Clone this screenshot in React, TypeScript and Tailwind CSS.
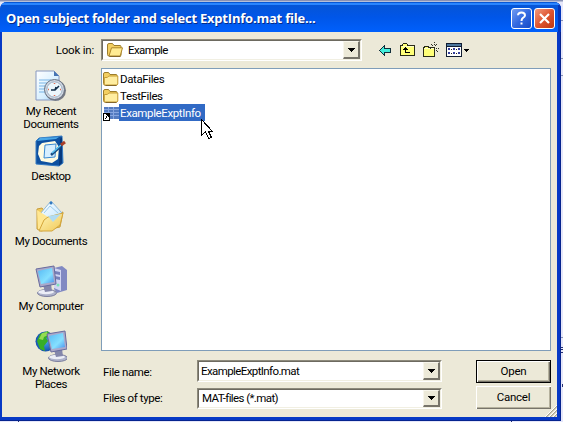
import type { ReactNode } from "react";

const ui = "font-['Roboto','Noto_Sans',sans-serif]";

function Folder({ open = false }: { open?: boolean }) {
  return (
    <svg width="16" height="14" viewBox="0 0 16 14" className="shrink-0">
      <path d="M.5 3V2Q.5.5 2 .5h3.5L7 2.5h6q1 0 1 1V12q0 1-1 1H2q-1.500 0-1.500-1.500z" fill="#f3cf62" stroke="#9c7d2c" />
      {open ? (
        <path d="M4.500 4.800h11L13.200 13H2z" fill="#ffeb91" stroke="#ad862b" />
      ) : (
        <path d="M1.300 5.500h3l1.500-1.500h9v8l-.8 1H1.300z" fill="#ffeda0" stroke="#c59c35" />
      )}
      <path d="M2.500 13.500h11" stroke="#83662a" />
    </svg>
  );
}

function Caret() {
  return (
    <svg width="7" height="4" viewBox="0 0 7 4" shapeRendering="crispEdges">
      <path d="M0 0h7v1H6v1H5v1H4v1H3V3H2V2H1V1H0z" />
    </svg>
  );
}

function Combo({ children, className }: { children: ReactNode; className: string }) {
  return (
    <div className={`flex border border-t-[#8d8a7c] border-l-[#8d8a7c] border-r-white border-b-white bg-white ${className}`}>
      <div className="flex min-w-0 flex-1 border border-t-[#6d6a60] border-l-[#6d6a60] border-r-[#f1efe2] border-b-[#f1efe2]">
        <div className="flex min-w-0 flex-1 items-center">{children}</div>
        <div className="flex w-[17px] items-center justify-center border-t border-l border-r-2 border-b-2 border-t-[#f8f6ec] border-l-[#f8f6ec] border-r-[#77746a] border-b-[#77746a] bg-[#ece9d8]">
          <Caret />
        </div>
      </div>
    </div>
  );
}

function RecentIcon() {
  return (
    <svg width="32" height="32" viewBox="0 0 32 32">
      <path d="M1 1h18l5 5v24H1z" fill="url(#paper)" stroke="#8798c0" />
      <path d="M19 1v5h5z" fill="#4574b3" />
      <path d="M4 10h12M4 13h9M4 16h7M4 19h6M4 22h6" stroke="#78b5e7" />
      <circle cx="20.500" cy="20.500" r="10.500" fill="#777b85" />
      <circle cx="19.500" cy="19.500" r="10" fill="#d1d9e4" stroke="#687180" />
      <circle cx="19.500" cy="19.500" r="7.700" fill="#ecf7fc" stroke="#9faec0" />
      <path d="M19.500 13v1M19.500 25v1M13 19.500h1M25 19.500h1" stroke="#e66950" strokeWidth="1.500" />
      <path d="M16 20h4l4-4M20 20l1-3" stroke="#14304a" strokeWidth="1.500" fill="none" />
    </svg>
  );
}

function DesktopIcon() {
  return (
    <svg width="32" height="32" viewBox="0 0 32 32">
      <path d="M4 3 27 1l1 27-4 3-23-2V6z" fill="#0d50a0" stroke="#347bc3" />
      <path d="M27 2v26l-3 3 1-27z" fill="#06397e" />
      <path d="M5 3 24 2l-3 2L2 6z" fill="#4ba8e8" />
      <path d="M7 8 20 6l4 6-1 12-6 4-11-2-3-7 1-8z" fill="#fffbe2" />
      <path d="m10 10 11-1-1 13-11 1z" fill="#d7efff" stroke="#3989d1" />
      <path d="m16 20 10-9" stroke="#194c82" strokeWidth="2.500" />
      <path d="m17 18 9-8" stroke="#5bc4f2" strokeWidth="1.500" />
      <path d="m26 10 4-3" stroke="#a93f28" strokeWidth="3" />
    </svg>
  );
}

function DocumentsIcon() {
  return (
    <svg width="32" height="32" viewBox="0 0 32 32">
      <path d="m2 9 5-1 3 4 15 1 3-1-3 15-19 4-4-2z" fill="#f0cb5e" stroke="#c89d3b" />
      <path d="m16 1 11 12-9 12L5 14z" fill="url(#paper)" stroke="#91b9d8" />
      <path d="m9 13 6-7 8 7" stroke="#9bccee" fill="none" />
      <path d="M2 10 13 17l-6 13-4-1z" fill="#ffe793" />
      <path d="m13 17 15-4-3 12-8 6H4l5-11z" fill="url(#gold)" stroke="#d3a53b" />
      <path d="m13 16 13-2-8 8z" fill="#b1dcf2" />
      <circle cx="16" cy="3" r="1.500" fill="#327ac0" />
    </svg>
  );
}

function Monitor() {
  return (
    <g>
      <ellipse cx="12" cy="28" rx="9.500" ry="3.500" fill="#aeb2ca" stroke="#7b7e9e" />
      <ellipse cx="11" cy="27" rx="8" ry="2.200" fill="#eceef7" />
      <path d="m8 20 8-1 1 7-7 1z" fill="#8487ab" />
      <path d="m1 4 18-3 2 18-16 3z" fill="#aaa9ca" stroke="#686b9e" />
      <path d="m3 6 14-3 2 14-13 2z" fill="url(#screen)" />
    </g>
  );
}

function ComputerIcon() {
  return (
    <svg width="32" height="32" viewBox="0 0 32 32">
      <path d="m19 3 8-2 5 4v20l-10 3-3-4z" fill="#8189c2" />
      <path d="m19 3 7 2v21l-7-3z" fill="#d1d5f2" />
      <path d="m20 6 5 1v3l-5-1zm0 5 5 1v3l-5-1z" fill="#7681bb" />
      <circle cx="23" cy="20" r="1.500" fill="#7be2b5" />
      <Monitor />
    </svg>
  );
}

function NetworkIcon() {
  return (
    <svg width="32" height="32" viewBox="0 0 32 32">
      <circle cx="10.500" cy="11.500" r="10" fill="url(#globe)" />
      <path d="m5 4 8-3 2 4-4 3 2 3-4 5 1 5-5-2-3-8z" fill="#37ae28" />
      <path d="m7 3 5-1 1 3-4 2-1 3-4-1z" fill="#94dc52" />
      <g transform="translate(11 0)"><Monitor /></g>
    </svg>
  );
}

const places = [
  { icon: <RecentIcon />, lines: ["My Recent", "Documents"] },
  { icon: <DesktopIcon />, lines: ["Desktop"] },
  { icon: <DocumentsIcon />, lines: ["My Documents"] },
  { icon: <ComputerIcon />, lines: ["My Computer"] },
  { icon: <NetworkIcon />, lines: ["My Network", "Places"] },
];

function Toolbar() {
  return (
    <svg width="92" height="18" viewBox="378 41 92 18" className="mt-[9px] ml-4" shapeRendering="crispEdges">
      <path d="M379.500 50.500 384.500 45.500v3h6v4h-6v3z" fill="#43eedc" stroke="#112e3b" />
      <path d="M400.500 55.500v-10h2v-1l1-1h3l1 1v1h7v10z" fill="#ffff78" stroke="#292b18" />
      <path d="M401.500 46.500h12" stroke="#ffffcb" />
      <path d="M403 49h1v-1h1v-1h1v1h1v1h1v1h-2v2h4v1h-5v-3h-2z" />
      <path d="M423.500 56.500v-9h1v-1h4v1h6v9z" fill="#ffff78" stroke="#292b18" />
      <path d="M424 48.500h10" stroke="#ffffcb" />
      <path d="M434 42v4M434 49v4M431 48h-2M436 48h3M431 44l2 2M437 44l-2 2M436 50l3 3" stroke="#303327" strokeDasharray="1 1" />
      <path d="M446.500 43.500h15v13h-15z" fill="white" stroke="#111d32" />
      <path d="M447 44h14v2h-14z" fill="#4c779d" />
      <path d="M446 46.500h16" stroke="#111d32" />
      <path d="M448 48h2v2h-2zm5 0h2v2h-2zm5 0h2v2h-2zm-10 4h2v2h-2zm5 0h2v2h-2zm5 0h2v2h-2z" fill="#35409b" />
      <path d="M451 49h1m4 0h1m-6 4h1m4 0h1" stroke="#222" />
      <path d="M464 49h5v1h-1v1h-1v1h-1v-1h-1v-1h-1z" />
    </svg>
  );
}

function FileIcon() {
  return (
    <svg width="16" height="16" viewBox="0 0 16 16" className="shrink-0" shapeRendering="crispEdges">
      <path d="M1 2h15v12H1z" fill="#547bc0" />
      <path d="M1 4.500h15M1 7.500h15M1 10.500h15M5.500 2v12M10.500 2v12" stroke="#86a5df" />
      <path d="M.5 8.500h6v7h-6z" fill="white" stroke="black" />
      <path d="M2 13h1v-2h1v-1h-1V9h3v3H5v-1H4v2H3v1H2z" />
    </svg>
  );
}

export default function App() {
  return (
    <main className={`relative h-[422px] w-[563px] overflow-hidden bg-[#e6e7fa] pt-[2px] text-[11.500px] leading-[13px] tracking-[-0.38px] text-black ${ui}`}>
      <svg width="563" height="422" className="absolute inset-0" shapeRendering="crispEdges">
        <path d="M0 .5h563M561 20.500h2M561 58.500h2M561 75.500h2M561 337.500h2" stroke="#8992b6" />
        <path d="M0 1.500h563" stroke="#b8bfd7" />
        <path d="M561 347.500h2M561 349.500h2M561 352.500h2M562 384v3M18.500 421v1M511.500 421v1" stroke="#263072" />
        <defs>
          <linearGradient id="paper" x2="1" y2="1"><stop stopColor="#fff" /><stop offset=".6" stopColor="#d7efff" /><stop offset="1" stopColor="#9acdf1" /></linearGradient>
          <linearGradient id="gold" x2="1" y2="1"><stop stopColor="#fff6bb" /><stop offset="1" stopColor="#f1c957" /></linearGradient>
          <linearGradient id="screen" x2="1" y2="1"><stop stopColor="#56b9f4" /><stop offset=".6" stopColor="#85e0ff" /><stop offset="1" stopColor="#4b91ee" /></linearGradient>
          <radialGradient id="globe"><stop stopColor="#4baaf1" /><stop offset="1" stopColor="#1451ae" /></radialGradient>
        </defs>
      </svg>
      <section className="relative flex h-[419px] w-[561px] flex-col overflow-hidden rounded-t-[7px] bg-[#0739c5] shadow-[inset_-1px_-1px_#06248f]">
        <header className="flex h-[30px] shrink-0 items-center bg-linear-to-b from-[#0754d2] via-[#0056e8] to-[#0060fc] pr-[6px] pl-[6px] shadow-[inset_0_1px_#0757d5,inset_0_3px_#2a85ff,inset_-3px_0_#0536ba]">
          <h1 className="mt-[3px] flex-1 whitespace-nowrap font-['Open_Sans'] text-[13px] font-bold tracking-[-0.21px] text-white [text-shadow:1px_1px_#052b86]">Open subject folder and select ExptInfo.mat file...</h1>
          <div className="mt-[3px] flex gap-[2px]">
            <button className="flex size-[21px] items-center justify-center rounded-[3px] border border-white bg-linear-to-br from-[#739cf1] via-[#346ae1] to-[#164bc6]" aria-label="Help">
              <svg width="13" height="15" viewBox="0 0 13 15" fill="none"><path d="M3 4.200Q3.200 1.500 6.500 1.500T10 4.300Q10 6 7.700 7.200 6.500 8 6.500 10" stroke="white" strokeWidth="2" /><path d="M5.500 11.500h2v2h-2z" fill="white" /></svg>
            </button>
            <button className="flex size-[21px] items-center justify-center rounded-[3px] border border-white bg-linear-to-br from-[#ef987d] via-[#df5530] to-[#bd3713]" aria-label="Close">
              <svg width="13" height="13"><path d="m2 2 9 9m0-9-9 9" stroke="white" strokeWidth="2.200" /></svg>
            </button>
          </div>
        </header>
        <div className="relative mr-1 ml-[2px] flex h-[385px] bg-[#ece9d8]">
          <aside className="flex w-[98px] shrink-0 flex-col">
            <div className="flex h-[38px] items-center justify-end pr-[6px] pb-[2px] tracking-[-0.2px]">Look in:</div>
            {places.map(({ icon, lines }) => (
              <div key={lines[0]} className="flex h-[65px] shrink-0 flex-col items-center whitespace-nowrap text-center">
                {icon}
                <div className="mt-[3px]">{lines.map((line) => <div key={line}>{line}</div>)}</div>
              </div>
            ))}
          </aside>
          <div className="flex min-w-0 flex-1 flex-col pl-px">
            <div className="flex h-9 shrink-0">
              <Combo className="mt-[7px] h-[22px] w-[261px]">
                <div className="flex items-center gap-[5px] pl-1 tracking-[-0.6px]"><Folder open />Example</div>
              </Combo>
              <Toolbar />
            </div>
            <div className="h-[283px] w-[450px] shrink-0 border border-[#7f9db9] bg-white pt-px pl-px">
              <div className="flex h-[17px] items-center gap-px"><Folder /><span className="pt-px">DataFiles</span></div>
              <div className="flex h-[17px] items-center gap-px"><Folder /><span className="pt-px">TestFiles</span></div>
              <div className="flex h-[17px] items-center"><FileIcon /><span className="flex h-[17px] w-[86px] items-center bg-[#316ac5] pt-px pl-px text-white">ExampleExptInfo</span></div>
            </div>
            <div className="mt-[9px] flex">
              <div className="flex w-[96px] flex-col pl-[2px]">
                <div className="h-[26px] pt-[6px]">File name:</div>
                <div className="pt-[6px]">Files of type:</div>
              </div>
              <div className="flex w-[245px] flex-col gap-[6px] tracking-[-0.6px]">
                <Combo className="h-[22px]"><span className="pt-px pl-[2px]">ExampleExptInfo.mat</span></Combo>
                <Combo className="h-[21px]"><span className="pl-[3px]">MAT-files (*.mat)</span></Combo>
              </div>
              <div className="ml-[34px] flex w-[75px] flex-col gap-[3px] tracking-[-0.25px]">
                <button className="h-[23px] border border-black bg-[#ece9d8] pb-px shadow-[inset_1px_1px_white,inset_-1px_-1px_#77746a,inset_-2px_-2px_#b5b19d]">Open</button>
                <button className="h-[23px] bg-[#ece9d8] pb-px shadow-[inset_1px_1px_white,inset_-1px_-1px_#77746a,inset_-2px_-2px_#b5b19d]">Cancel</button>
              </div>
            </div>
          </div>
          <svg width="12" height="12" className="absolute right-0 bottom-0"><path d="M1 12 12 1M5 12 12 5M9 12 12 9" stroke="#aaa791" strokeWidth="1.500" /><path d="M0 12 12 0M4 12 12 4M8 12 12 8" stroke="white" /></svg>
        </div>
      </section>
      <svg width="12" height="20" viewBox="0 0 12 20" className="absolute top-[119px] left-[201px]" shapeRendering="crispEdges">
        <path d="M.5.5v16l4-4 3 7 3-1-3-6h4z" fill="white" stroke="black" />
      </svg>
    </main>
  );
}
